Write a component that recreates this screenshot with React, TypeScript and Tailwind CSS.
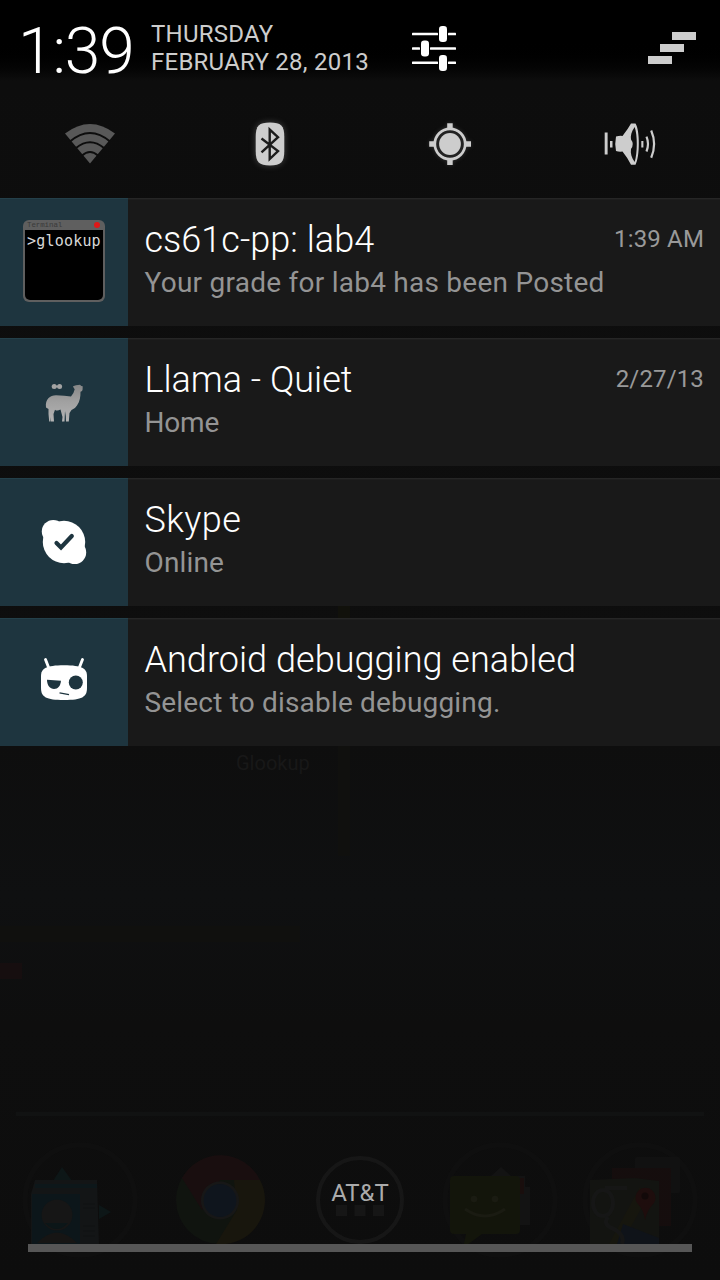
import type { ReactNode } from "react";

function SettingsIcon() {
  return (
    <svg width="48" height="48" viewBox="0 0 48 48" fill="#fff">
      <rect x="2" y="8.7" width="26" height="2.6" rx="0.6" />
      <rect x="38" y="8.7" width="8" height="2.6" rx="0.6" />
      <rect x="29" y="2" width="8" height="16" rx="3.2" />
      <rect x="2" y="23.2" width="8" height="2.6" rx="0.6" />
      <rect x="20" y="23.2" width="26" height="2.6" rx="0.6" />
      <rect x="11" y="16.5" width="8" height="16" rx="3.2" />
      <rect x="2" y="37.5" width="26" height="2.6" rx="0.6" />
      <rect x="38" y="37.5" width="8" height="2.6" rx="0.6" />
      <rect x="29" y="31" width="8" height="16" rx="3.2" />
    </svg>
  );
}

function ClearAllIcon() {
  return (
    <svg width="48" height="32" viewBox="0 0 48 32" fill="#cdcdcd" shapeRendering="crispEdges">
      <rect x="24" y="0" width="24" height="8" />
      <rect x="12" y="12" width="24" height="8" />
      <rect x="0" y="24" width="24" height="8" />
    </svg>
  );
}

function WifiIcon() {
  return (
    <svg width="64" height="64" viewBox="58 112 64 64">
      <path d="M65 133.500 Q90 114.500 115 133.500 L90 163.500Z" fill="#585858" />
      <g fill="none" stroke="#0d0d0d" strokeWidth="2.100">
        <path d="M70 141.500 Q90 124.500 110 141.500" />
        <path d="M76 148 Q90 136.500 104 148" />
        <path d="M82 155.500 Q90 148.500 98 155.500" />
      </g>
    </svg>
  );
}

function BluetoothIcon() {
  return (
    <svg width="64" height="64" viewBox="238 112 64 64" className="drop-shadow-[0_0_3px_rgba(200,200,200,0.3)]">
      <path
        d="M270 122.500C281 122.500 284.300 125.500 284.300 137V151C284.300 162 281 165.500 270 165.500C259 165.500 255.700 162 255.700 151V137C255.700 125.500 259 122.500 270 122.500Z"
        fill="#cdcdcd"
      />
      <path d="M261.500 138.500L278 151L269.700 159V129.500L278 137.200L261.500 152.300" fill="none" stroke="#1c1c1c" strokeWidth="2.400" />
    </svg>
  );
}

function LocationIcon() {
  return (
    <svg width="64" height="64" viewBox="418 112 64 64" className="drop-shadow-[0_0_2px_rgba(200,200,200,0.2)]">
      <circle cx="450" cy="144" r="15.200" fill="#222" stroke="#cdcdcd" strokeWidth="2.700" />
      <circle cx="450" cy="144" r="10.900" fill="#cdcdcd" />
      <path d="M447.200 123.200h5.500v6h-5.500zM447.200 159h5.500v6h-5.500zM429.200 141.200h6v5.500h-6zM465 141.200h6v5.500h-6z" fill="#cdcdcd" />
    </svg>
  );
}

function SoundIcon() {
  return (
    <svg width="64" height="64" viewBox="598 112 64 64">
      <g fill="#cdcdcd">
        <rect x="604.700" y="132.500" width="2.900" height="22" />
        <rect x="610" y="141" width="2.500" height="6.500" />
        <path d="M616 136.500Q620 135.500 622.500 136Q628 129 631 123.500H635.500C640 130 640 157 635.500 164.700H631Q627 157 622.500 151.500Q619 152 616 151Q614.500 144 616 136.500Z" />
        <rect x="641.300" y="141" width="2.100" height="6.500" />
      </g>
      <path d="M634.700 127C631.500 131 630.300 136 631 139.500Q634.500 144 631 149C630.300 153 631.500 158 634.700 162C637.500 153 637.500 135 634.700 127Z" fill="#101010" />
      <g fill="none" stroke="#cdcdcd" strokeWidth="2.200">
        <path d="M646.500 136.700Q649.500 144 646.500 151.500" />
        <path d="M651.200 130.500Q657 144 651.200 157.700" />
      </g>
    </svg>
  );
}

function TerminalIcon() {
  return (
    <div className="mb-[3px] flex h-[82px] w-[82px] flex-col rounded-[6px] bg-[#5f5f5f] px-[2px] pb-[2px]">
      <div className="flex h-[10px] items-center justify-between pr-[3px] pl-[2px]">
        <span className="pt-[2px] font-['Liberation_Mono',monospace] text-[7.500px] leading-[9px] tracking-[-0.1px] text-[#3a3a3a]">Terminal</span>
        <span className="h-[6px] w-[6px] rounded-full bg-[#e01818]" />
      </div>
      <div className="flex flex-1 rounded-b-[5px] bg-black pt-[2px] pl-[2px]">
        <span className="font-['DejaVu_Sans_Mono',monospace] text-[15px] leading-[18px] tracking-[0.200px] text-[#d8d8d8]">&gt;glookup</span>
      </div>
    </div>
  );
}

function LlamaIcon() {
  return (
    <svg width="128" height="128" viewBox="0 338 128 128">
      <defs>
        <linearGradient id="wool" x1="0" y1="384" x2="0" y2="422" gradientUnits="userSpaceOnUse">
          <stop offset="0" stopColor="#858585" />
          <stop offset="0.450" stopColor="#a0a0a0" />
          <stop offset="1" stopColor="#b4b4b4" />
        </linearGradient>
      </defs>
      <g fill="#a3a3a3">
        <circle cx="54.200" cy="386.500" r="2.500" />
        <circle cx="59.600" cy="386.500" r="2.500" />
        <rect x="54" y="385.600" width="6" height="1.800" />
      </g>
      <path
        d="M73 386.200L76 385.200L80 384.700L81.300 386L82.700 386.200L82.600 389.500Q82.500 391.500 80.500 391.800C80.500 397 80 401 77 405.500Q75 409 71.500 410L69.500 413L68.800 421.500H66L65.800 416L65 411L64.500 421.500H62L62.500 417L60.500 409.500Q57 411.500 55 409.700L53.500 414L54 421.500H51L50.500 417L50.500 421.500H49.200L48.500 414L48.500 409L46 407.500C45 399 50 395.500 56 395.200Q65 395.500 71 396.500Q74 393 74.700 389.200L73.500 387.500Z"
        fill="url(#wool)"
      />
    </svg>
  );
}

function SkypeIcon() {
  return (
    <svg width="128" height="128" viewBox="0 478 128 128">
      <g fill="#fff">
        <circle cx="64" cy="542" r="21.200" />
        <circle cx="53.300" cy="531.500" r="11.500" />
        <circle cx="74.700" cy="552.500" r="11.500" />
      </g>
      <path d="M56.500 543L61 547.500L71.800 536" fill="none" stroke="#1e353f" strokeWidth="4.200" strokeLinecap="round" strokeLinejoin="miter" />
    </svg>
  );
}

function CyanogenIcon() {
  return (
    <svg width="128" height="128" viewBox="0 618 128 128">
      <path d="M45.500 659.500L48.800 668M82.500 659.500L79.200 668" stroke="#fff" strokeWidth="2.900" strokeLinecap="round" />
      <path d="M64 665.200C82 665.200 87 668.500 87 676V688C87 697 82 700 64 700C46 700 41 697 41 688V676C41 668.500 46 665.200 64 665.200Z" fill="#fff" />
      <path d="M47 679.800L61 680.800C60.500 686 58 689 54 689C50 689 47 685.500 47 679.800Z" fill="#1e353f" />
      <circle cx="75.800" cy="682.500" r="7" fill="#1e353f" />
      <path d="M59.500 692.800L69 694.600" stroke="#1e353f" strokeWidth="1.200" />
    </svg>
  );
}

interface Notice {
  title: string;
  detail: string;
  time?: string;
  icon: ReactNode;
  titleTracking: string;
  detailTracking: string;
}

const notices: Notice[] = [
  { title: "cs61c-pp: lab4", detail: "Your grade for lab4 has been Posted", time: "1:39 AM", icon: <TerminalIcon />, titleTracking: "tracking-[0.03px]", detailTracking: "tracking-[0.25px]" },
  { title: "Llama - Quiet", detail: "Home", time: "2/27/13", icon: <LlamaIcon />, titleTracking: "tracking-normal", detailTracking: "tracking-[-0.2px]" },
  { title: "Skype", detail: "Online", icon: <SkypeIcon />, titleTracking: "tracking-[0.4px]", detailTracking: "tracking-[0.15px]" },
  { title: "Android debugging enabled", detail: "Select to disable debugging.", icon: <CyanogenIcon />, titleTracking: "tracking-[0.04px]", detailTracking: "tracking-[0.18px]" },
];

function NoticeRow({ notice }: { notice: Notice }) {
  return (
    <article className="flex h-32 bg-[#191919]">
      <div className="flex w-32 shrink-0 items-center justify-center bg-[#1e353f] shadow-[inset_0_1px_0_#24404a]">{notice.icon}</div>
      <div className="flex min-w-0 flex-1 flex-col pt-[20px] pr-4 pl-[16.500px] shadow-[inset_0_1px_0_#262626,inset_0_2px_0_#1e1e1e]">
        <div className="flex items-start justify-between">
          <h2 className={`text-[36px] leading-[44px] font-light whitespace-nowrap text-white ${notice.titleTracking}`}>{notice.title}</h2>
          {notice.time && <time className="pt-[6px] text-[24px] leading-[30px] tracking-[0.150px] text-[#999]">{notice.time}</time>}
        </div>
        <p className={`pt-[4px] text-[28px] leading-[34px] whitespace-nowrap text-[#949494] ${notice.detailTracking}`}>{notice.detail}</p>
      </div>
    </article>
  );
}

function HomeScreen() {
  return (
    <svg width="720" height="1280" viewBox="0 0 720 1280" className="absolute inset-0">
      <defs>
        <linearGradient id="wallpaper" x1="0" y1="0" x2="0" y2="1">
          <stop offset="0" stopColor="#0d0d0d" />
          <stop offset="0.580" stopColor="#0e0e0e" />
          <stop offset="0.700" stopColor="#0f1011" />
          <stop offset="0.800" stopColor="#0e0e0e" />
          <stop offset="1" stopColor="#0d0d0d" />
        </linearGradient>
      </defs>
      <rect width="720" height="1280" fill="url(#wallpaper)" />
      <rect x="338" y="604" width="12" height="14" fill="#11110b" />
      <rect x="338" y="746" width="12" height="110" fill="#10100e" />
      <rect x="0" y="926" width="300" height="16" fill="#10100e" />
      <rect x="0" y="963" width="22" height="16" fill="#160e0f" />
      <rect x="16" y="1112" width="688" height="4" fill="#111212" />
      <g opacity="0.900">
        <g fill="none" stroke="#101010" strokeWidth="5">
          <circle cx="80" cy="1200" r="55" />
          <circle cx="500" cy="1200" r="55" />
          <circle cx="640" cy="1200" r="55" />
        </g>
        <path d="M53 1181L62 1167L72 1181ZM99 1205L111 1212L99 1219Z" fill="#0d1819" />
        <path d="M35 1180H97L99 1246H31V1194Z" fill="#141617" />
        <rect x="32" y="1194" width="48" height="50" fill="#0c171c" />
        <rect x="35" y="1184" width="62" height="4" fill="#0d191c" />
        <circle cx="57" cy="1215" r="15.500" fill="#171717" />
        <path d="M45 1223H68Q57 1235 45 1223Z" fill="#0c171a" />
        <path d="M37 1243Q57 1222 77 1243Z" fill="#171615" />
        <path d="M83 1204H95M83 1208H95M83 1226H95M83 1231H95M83 1236H95" stroke="#111314" />
        <circle cx="220" cy="1200" r="44" fill="#111510" />
        <path d="M182 1178A44 44 0 0 1 260 1180H220L202 1210Z" fill="#1b0f10" />
        <path d="M260 1180A44 44 0 0 1 216 1244L237 1210L234 1180Z" fill="#1a170d" />
        <circle cx="220" cy="1200.500" r="19" fill="#191919" />
        <circle cx="220" cy="1200.500" r="16.500" fill="#10161f" />
        <circle cx="360" cy="1200" r="42" fill="none" stroke="#181818" strokeWidth="4" />
        <path d="M336 1205h11v11h-11zM354.500 1205h11v11h-11zM373 1205h11v11h-11z" fill="#171717" />
        <path d="M491 1176L501 1167L511 1176H525V1187H530V1225H510V1176Z" fill="#141414" />
        <path d="M454 1176H516Q520 1176 520 1180V1230Q520 1234 516 1234H482L463 1248L466 1234H454Q450 1234 450 1230V1180Q450 1176 454 1176Z" fill="#14160b" />
        <g fill="#1c1d13">
          <circle cx="474" cy="1199" r="3.300" />
          <circle cx="495" cy="1199" r="3.300" />
        </g>
        <path d="M465 1209Q485 1223 505 1209" stroke="#1c1d13" strokeWidth="3" fill="none" />
        <path d="M520 1178h4v16h-4z" fill="#1b0f0d" />
        <rect x="635" y="1157" width="45" height="36" rx="2" fill="#121212" />
        <rect x="612" y="1168" width="59" height="58" fill="#160e0e" />
        <path d="M590 1180L635 1178L659 1181V1244H590Z" fill="#141512" />
        <path d="M609 1244L640 1187L646 1200L621 1244Z" fill="#18170f" />
        <path d="M617 1244L623 1224L659 1238V1244Z" fill="#10141b" />
        <ellipse cx="603" cy="1203" rx="10" ry="13" fill="none" stroke="#171817" strokeWidth="4" />
        <path d="M627 1188H605M608 1217Q602 1225 614 1229Q625 1235 622 1244" fill="none" stroke="#171817" strokeWidth="4" />
        <path d="M645 1220Q644 1210 637 1203A10 10 0 1 1 654 1203Q647 1210 645 1220Z" fill="#200e0d" />
        <circle cx="645" cy="1196" r="3.500" fill="#130909" />
      </g>
    </svg>
  );
}

export default function App() {
  return (
    <div className="relative h-[1280px] w-[720px] overflow-hidden bg-[#0d0d0d] font-['Roboto',sans-serif]">
      <HomeScreen />
      <span className="absolute top-[751px] left-[236px] text-[20px] leading-[24px] text-[#181818]">Glookup</span>
      <main className="relative flex h-full flex-col">
        <header className="flex h-24 bg-linear-to-b from-black from-40% to-[#0d0d0d] to-84%">
          <div className="w-[131px] shrink-0 pt-[14px] pl-[18px] text-[64px] leading-[75px] font-light tracking-[-1.100px] whitespace-nowrap text-white">1:39</div>
          <div className="w-[261px] shrink-0 pt-[20px] pl-[20px] text-[24px] leading-[28px] tracking-[0.240px] whitespace-nowrap text-[#cdcdcd]">
            <div>THURSDAY</div>
            <div>FEBRUARY 28, 2013</div>
          </div>
          <div className="flex flex-1 items-center justify-between pr-6 pl-[18px]">
            <SettingsIcon />
            <ClearAllIcon />
          </div>
        </header>
        <nav className="grid h-24 grid-cols-4 place-items-center">
          <WifiIcon />
          <BluetoothIcon />
          <LocationIcon />
          <SoundIcon />
        </nav>
        <section className="flex flex-col gap-3 pt-[6px]">
          {notices.map((notice) => (
            <NoticeRow key={notice.title} notice={notice} />
          ))}
        </section>
        <footer className="mt-auto px-7 pb-7">
          <div className="text-center text-[24px] leading-[30px] text-[#ababab]">AT&amp;T</div>
          <div className="mt-[36px] h-2 bg-[#565656]" />
        </footer>
      </main>
    </div>
  );
}
